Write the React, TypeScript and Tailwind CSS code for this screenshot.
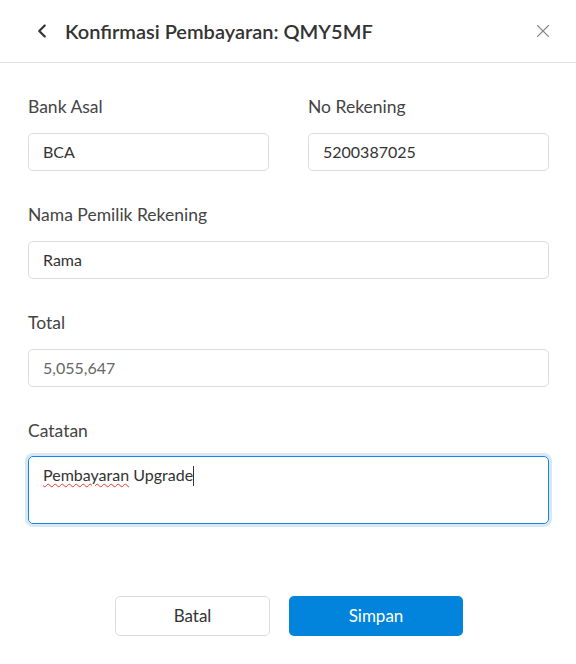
import { ChevronLeft, X } from "lucide-react";

const Field = ({
  label,
  value,
  disabled,
}: {
  label: string;
  value: string;
  disabled?: boolean;
}) => (
  <div className="flex flex-col">
    <label className="text-[17.5px] leading-6 text-[#444]">{label}</label>
    <div
      className={`mt-[14px] h-[38px] rounded-[5px] border border-[#dcdcdc] px-[14px] flex items-center text-[16px] ${
        disabled ? "text-[#666]" : "text-[#333]"
      }`}
    >
      {value}
    </div>
  </div>
);

export default function App() {
  return (
    <div
      className="w-[576px] h-[664px] bg-white flex flex-col"
      style={{ fontFamily: "Lato, 'Noto Sans', sans-serif" }}
    >
      {/* Header */}
      <div className="h-[63px] border-b border-[#e2e2e2] flex items-center pl-[31px] pr-[22px]">
        <ChevronLeft size={22} strokeWidth={2.4} className="text-[#333]" />
        <h1 className="ml-[12px] text-[20px] font-semibold text-[#333] flex-1">
          Konfirmasi Pembayaran: QMY5MF
        </h1>
        <X size={22} strokeWidth={1.2} className="text-[#888]" />
      </div>

      {/* Form */}
      <div className="pl-[28px] pr-[27px] pt-[32px] flex flex-col gap-[32px]">
        <div className="grid grid-cols-2 gap-[39px]">
          <Field label="Bank Asal" value="BCA" />
          <Field label="No Rekening" value="5200387025" />
        </div>
        <Field label="Nama Pemilik Rekening" value="Rama" />
        <Field label="Total" value="5,055,647" disabled />
        <div className="flex flex-col">
          <label className="text-[17.5px] leading-6 text-[#444]">Catatan</label>
          <div className="mt-[13px] h-[68px] rounded-[5px] border border-[#1a86db] ring-[3px] ring-[#d7e9f8] px-[14px] pt-[6px] text-[16px] text-[#333]">
            <span className="underline decoration-wavy decoration-[#e33] decoration-1 underline-offset-2">
              Pembayaran
            </span>{" "}
            Upgrade
            <span className="inline-block w-px h-[20px] bg-[#333] align-middle -mt-[2px]" />
          </div>
        </div>
      </div>

      {/* Buttons */}
      <div className="mt-auto mb-[28px] pl-[2px] flex justify-center gap-[19px]">
        <button className="w-[155px] h-[40px] rounded-[5px] border border-[#dcdcdc] bg-white text-[17px] text-[#333]">
          Batal
        </button>
        <button className="w-[174px] h-[40px] rounded-[5px] bg-[#0284dd] text-[17px] text-white">
          Simpan
        </button>
      </div>
    </div>
  );
}
